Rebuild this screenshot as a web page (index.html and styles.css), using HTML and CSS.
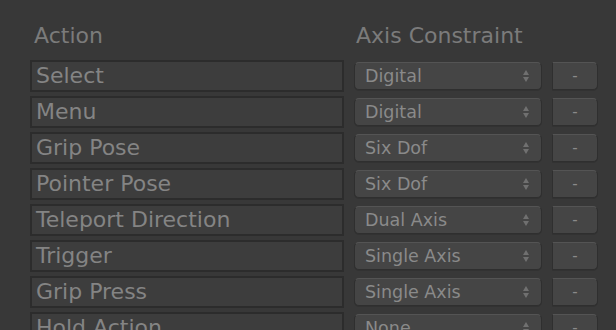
FILE: index.html
```html
<!DOCTYPE html>
<html lang="en">
<head>
  <meta charset="UTF-8">
  <title>Action Bindings</title>
  <link rel="stylesheet" href="styles.css">
</head>
<body>

  <!-- Action list editor -->
  <div class="action-table">
    <div class="table-header">
      <span class="col-name">Action</span>
      <span class="col-axis">Axis Constraint</span>
    </div>

    <div class="action-row">
      <div class="name-field">Select</div>
      <div class="axis-select">Digital<span class="arrows"></span></div>
      <button class="remove-btn">-</button>
    </div>
    <div class="action-row">
      <div class="name-field">Menu</div>
      <div class="axis-select">Digital<span class="arrows"></span></div>
      <button class="remove-btn">-</button>
    </div>
    <div class="action-row">
      <div class="name-field">Grip Pose</div>
      <div class="axis-select">Six Dof<span class="arrows"></span></div>
      <button class="remove-btn">-</button>
    </div>
    <div class="action-row">
      <div class="name-field">Pointer Pose</div>
      <div class="axis-select">Six Dof<span class="arrows"></span></div>
      <button class="remove-btn">-</button>
    </div>
    <div class="action-row">
      <div class="name-field">Teleport Direction</div>
      <div class="axis-select">Dual Axis<span class="arrows"></span></div>
      <button class="remove-btn">-</button>
    </div>
    <div class="action-row">
      <div class="name-field">Trigger</div>
      <div class="axis-select">Single Axis<span class="arrows"></span></div>
      <button class="remove-btn">-</button>
    </div>
    <div class="action-row">
      <div class="name-field">Grip Press</div>
      <div class="axis-select">Single Axis<span class="arrows"></span></div>
      <button class="remove-btn">-</button>
    </div>
    <div class="action-row">
      <div class="name-field">Hold Action</div>
      <div class="axis-select">None<span class="arrows"></span></div>
      <button class="remove-btn">-</button>
    </div>
  </div>

</body>
</html>
```

FILE: styles.css
```css
body {
  font-family: "DejaVu Sans", Verdana, sans-serif;
  background-color: #383838;
  margin: 0;
  padding: 0;
  overflow: hidden;
}

.action-table {
  padding: 22px 0 0 30px;
  display: flex;
  flex-direction: column;
  gap: 4px;
}

/* Column titles */
.table-header {
  display: flex;
  height: 34px;
  font-size: 22px;
  line-height: 27px;
  color: #7b7b7b;
}

.col-name {
  width: 322px;
  padding-left: 4px;
}

/* One action per row */
.action-row {
  display: flex;
  align-items: center;
  height: 32px;
}

.name-field {
  box-sizing: border-box;
  width: 314px;
  height: 32px;
  border: 2px solid #2c2c2c;
  background: #3d3d3d;
  color: #848484;
  font-size: 22px;
  line-height: 27px;
  padding-left: 4px;
  white-space: nowrap;
  overflow: hidden;
}

.axis-select {
  box-sizing: border-box;
  position: relative;
  width: 188px;
  height: 28px;
  margin-left: 10px;
  border: 1px solid #2f2f2f;
  border-top-color: #545454;
  border-radius: 5px;
  background: #454545;
  box-shadow: 0 1px 0 #323232;
  color: #8a8a8a;
  font-size: 17.5px;
  line-height: 27px;
  padding-left: 10px;
}

/* little up/down arrows on the right of the dropdown */
.arrows {
  position: absolute;
  right: 11px;
  top: 7px;
  width: 7px;
  height: 12px;
}

.arrows::before,
.arrows::after {
  content: "";
  position: absolute;
  left: 0;
  border-left: 3.5px solid transparent;
  border-right: 3.5px solid transparent;
}

.arrows::before {
  top: 0;
  border-bottom: 5px solid #707070;
}

.arrows::after {
  bottom: 0;
  border-top: 5px solid #707070;
}

.remove-btn {
  box-sizing: border-box;
  width: 46px;
  height: 28px;
  margin-left: 10px;
  padding: 0;
  border: 1px solid #2f2f2f;
  border-top-color: #545454;
  border-radius: 1px 5px 5px 1px;
  background: #454545;
  box-shadow: 0 1px 0 #323232;
  color: #8a8a8a;
  font-family: "DejaVu Sans", Verdana, sans-serif;
  font-size: 15px;
  line-height: 22px;
}
```
